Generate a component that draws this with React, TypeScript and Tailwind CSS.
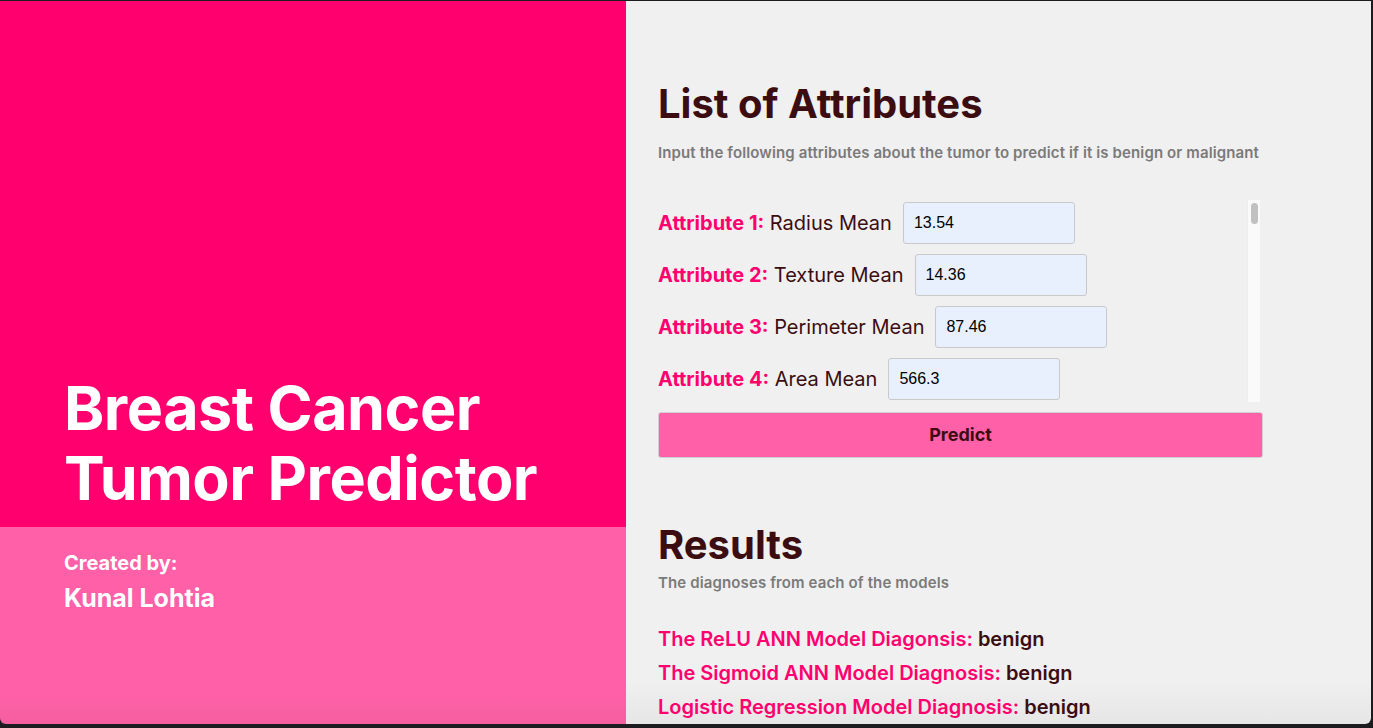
import React from 'react';

const attributes: [string, string][] = [
  ['Radius Mean', '13.54'],
  ['Texture Mean', '14.36'],
  ['Perimeter Mean', '87.46'],
  ['Area Mean', '566.3'],
  ['Smoothness Mean', '0.09779'],
  ['Compactness Mean', '0.08129'],
  ['Concavity Mean', '0.06664'],
  ['Concave Points Mean', '0.04781'],
  ['Symmetry Mean', '0.1885'],
  ['Fractal Dimension Mean', '0.05766'],
  ['Radius SE', '0.2699'],
  ['Texture SE', '0.7886'],
  ['Perimeter SE', '2.058'],
  ['Area SE', '23.56'],
  ['Smoothness SE', '0.008462'],
  ['Compactness SE', '0.0146'],
  ['Concavity SE', '0.02387'],
  ['Concave Points SE', '0.01315'],
  ['Symmetry SE', '0.0198'],
  ['Fractal Dimension SE', '0.0023'],
  ['Radius Worst', '15.11'],
  ['Texture Worst', '19.26'],
  ['Perimeter Worst', '99.7'],
  ['Area Worst', '711.2'],
  ['Smoothness Worst', '0.144'],
  ['Compactness Worst', '0.1773'],
  ['Concavity Worst', '0.239'],
  ['Concave Points Worst', '0.1288'],
  ['Symmetry Worst', '0.2977'],
  ['Fractal Dimension Worst', '0.07259'],
];

const results = [
  ['The ReLU ANN Model Diagonsis:', 'benign'],
  ['The Sigmoid ANN Model Diagnosis:', 'benign'],
  ['Logistic Regression Model Diagnosis:', 'benign'],
];

export default function App() {
  return (
    <div className="w-[1373px] h-[728px] bg-[#1c1c1e] pt-px pr-[2px] pb-[4px] font-['Inter',sans-serif]">
      <div className="flex h-full rounded-b-[6px] overflow-hidden">
        {/* Left: title panel */}
        <div className="w-[626px] flex flex-col">
          <div className="h-[526px] bg-[#ff006e] flex flex-col justify-end px-16 pb-[14px]">
            <h1 className="text-white font-bold text-[61px] leading-[70px] tracking-[-0.5px]">
              Breast Cancer
              <br />
              Tumor Predictor
            </h1>
          </div>
          <div className="flex-1 bg-gradient-to-b from-[#ff60a8] from-85% to-[#f45fa0] px-16 pt-[24px] text-white font-bold">
            <p className="text-[20px] leading-[24px]">Created by:</p>
            <p className="text-[25px] leading-[30px] mt-[8px]">Kunal Lohtia</p>
          </div>
        </div>

        {/* Right: form + results */}
        <div className="flex-1 bg-gradient-to-b from-[#f0f0f0] from-94% to-[#e6e6e6] pl-8 pt-[78px] text-[#3b0d11]">
          <h2 className="text-[40px] leading-[50px] font-bold">List of Attributes</h2>
          <p className="mt-[13px] text-[15px] font-semibold tracking-[0.12px] text-[#7a7a7a]">
            Input the following attributes about the tumor to predict if it is benign or malignant
          </p>

          <div className="mt-[35px] w-[604px] h-[202px] flex">
            <div className="flex-1 overflow-hidden">
              <div className="flex flex-col gap-[10px] pt-[2px]">
                {attributes.map(([name, value], i) => (
                  <div key={name} className="flex items-center gap-[11px]">
                    <span className="text-[20px]">
                      <span className="font-bold text-[#ff006e]">Attribute {i + 1}:</span> {name}
                    </span>
                    <input
                      readOnly
                      value={value}
                      className="w-[172px] h-[42px] rounded-[3px] border border-[#c9c9c9] bg-[#e8f0fe] px-[10px] text-[16px] text-black font-['Liberation_Sans',Arial,sans-serif] outline-none"
                    />
                  </div>
                ))}
              </div>
            </div>
            {/* scrollbar */}
            <div className="w-[13px] mr-[2px] bg-[#fafafa] border-l border-[#ececec] pt-[3px] flex justify-center">
              <div className="w-[7px] h-[21px] rounded-full bg-[#c1c1c1]" />
            </div>
          </div>

          <button className="mt-[10px] w-[605px] h-[46px] rounded-[3px] border border-[#d0d0d0] bg-[#ff60a8] text-[18px] font-bold text-[#3b0d11]">
            Predict
          </button>

          <h2 className="mt-[62px] text-[40px] leading-[50px] font-bold">Results</h2>
          <p className="mt-[2px] text-[15px] font-semibold tracking-[0.12px] text-[#7a7a7a]">The diagnoses from each of the models</p>

          <div className="mt-[33px] flex flex-col gap-[10px]">
            {results.map(([label, value]) => (
              <p key={label} className="text-[20px] leading-[24px] font-semibold">
                <span className="text-[#ff006e]">{label}</span> <span>{value}</span>
              </p>
            ))}
          </div>
        </div>
      </div>
    </div>
  );
}
